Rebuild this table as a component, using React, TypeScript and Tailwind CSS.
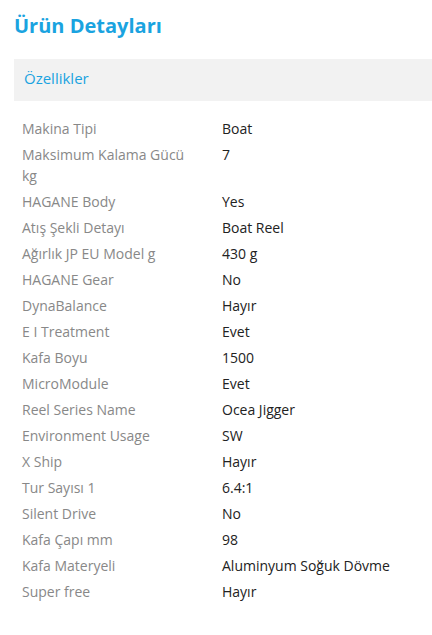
import React from "react";

const specs = [
  { label: "Makina Tipi", value: "Boat" },
  { label: "Maksimum Kalama Gücü kg", value: "7" },
  { label: "HAGANE Body", value: "Yes" },
  { label: "Atış Şekli Detayı", value: "Boat Reel" },
  { label: "Ağırlık JP EU Model g", value: "430 g" },
  { label: "HAGANE Gear", value: "No" },
  { label: "DynaBalance", value: "Hayır" },
  { label: "E I Treatment", value: "Evet" },
  { label: "Kafa Boyu", value: "1500" },
  { label: "MicroModule", value: "Evet" },
  { label: "Reel Series Name", value: "Ocea Jigger" },
  { label: "Environment Usage", value: "SW" },
  { label: "X Ship", value: "Hayır" },
  { label: "Tur Sayısı 1", value: "6.4:1" },
  { label: "Silent Drive", value: "No" },
  { label: "Kafa Çapı mm", value: "98" },
  { label: "Kafa Materyeli", value: "Aluminyum Soğuk Dövme" },
  { label: "Super free", value: "Hayır" },
];

export default function App() {
  return (
    <div
      className="w-[432px] h-[635px] bg-white pl-[14px] pt-[12px]"
      style={{ fontFamily: '"Open Sans", "Noto Sans", sans-serif' }}
    >
      <h2 className="text-[20px] leading-[28px] font-bold text-[#1aa3e0]">
        Ürün Detayları
      </h2>
      <div className="mt-[19px] h-[42px] bg-[#f2f2f2] flex items-center pl-[10px] pb-[4px]">
        <span className="text-[15px] text-[#1aa3e0]">Özellikler</span>
      </div>
      <div className="mt-[14px]">
        {specs.map((spec, i) => (
          <div key={i} className="flex text-[14px] leading-[21px]">
            <div className="w-[200px] shrink-0 pl-2 pr-[24px] py-[2.5px] text-[#888888]">
              {spec.label}
            </div>
            <div className="flex-1 px-2 py-[2.5px] text-[#222222]">
              {spec.value}
            </div>
          </div>
        ))}
      </div>
    </div>
  );
}
